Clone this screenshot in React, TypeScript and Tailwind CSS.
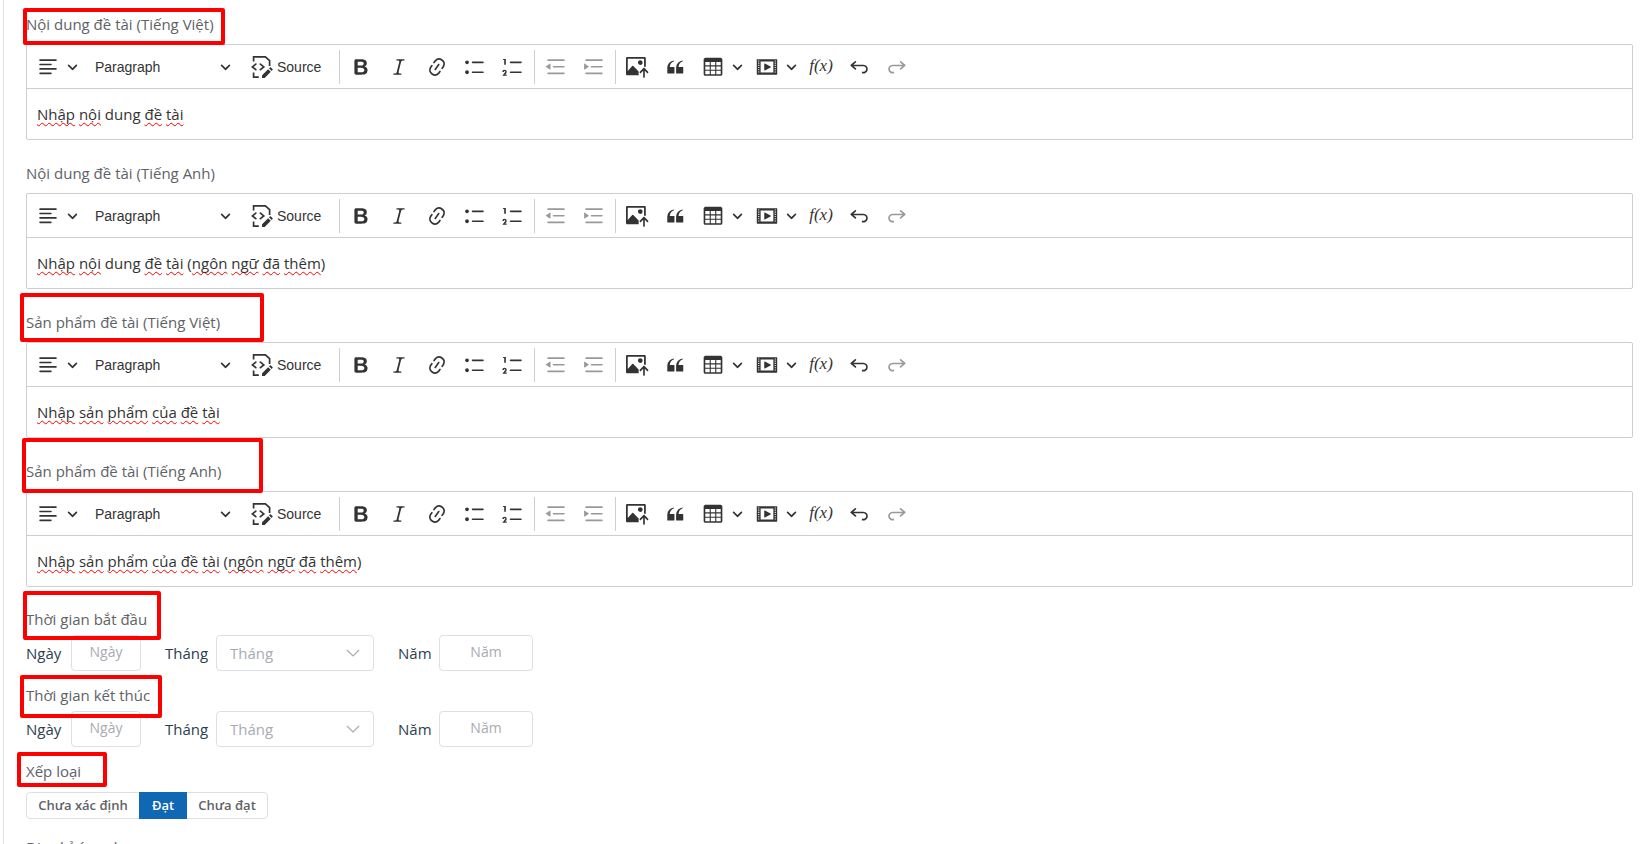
import React from "react";

const sans = "font-['Open_Sans','Noto_Sans',sans-serif]";

const ICONS = {
  align:
    "M2 3.75c0 .414.336.75.75.75h14.5a.75.75 0 1 0 0-1.5H2.75a.75.75 0 0 0-.75.75zm0 8c0 .414.336.75.75.75h14.5a.75.75 0 1 0 0-1.5H2.75a.75.75 0 0 0-.75.75zm0 4c0 .414.336.75.75.75h9.929a.75.75 0 1 0 0-1.5H2.75a.75.75 0 0 0-.75.75zm0-8c0 .414.336.75.75.75h9.929a.75.75 0 1 0 0-1.5H2.75a.75.75 0 0 0-.75.75z",
  bold:
    "M10.187 17H5.773c-.637 0-1.092-.138-1.364-.415-.273-.277-.409-.718-.409-1.323V4.738c0-.617.14-1.062.419-1.332.279-.27.73-.406 1.354-.406h4.68c.69 0 1.288.041 1.793.124.506.083.96.242 1.36.478.341.197.644.447.906.75a3.262 3.262 0 0 1 .808 2.162c0 1.401-.722 2.426-2.167 3.075C15.05 10.175 16 11.315 16 13.01a3.756 3.756 0 0 1-2.296 3.504 6.1 6.1 0 0 1-1.517.377c-.571.073-1.238.11-2 .11zm-.217-6.217H7v4.087h3.069c1.977 0 2.965-.69 2.965-2.072 0-.707-.256-1.22-.768-1.537-.512-.319-1.277-.478-2.296-.478zM7 5.13v3.619h2.606c.729 0 1.292-.067 1.69-.2a1.6 1.6 0 0 0 .91-.765c.165-.267.247-.566.247-.897 0-.707-.26-1.176-.778-1.409-.519-.232-1.31-.348-2.375-.348H7z",
  italic:
    "m9.586 14.633.021.004c-.036.335.095.655.393.962.082.083.173.15.274.201h1.474a.6.6 0 1 1 0 1.2H5.304a.6.6 0 0 1 0-1.2h1.15c.474-.07.809-.182 1.005-.334.157-.122.291-.32.404-.597l2.416-9.55a1.053 1.053 0 0 0-.281-.823 1.12 1.12 0 0 0-.442-.296H8.15a.6.6 0 0 1 0-1.2h6.443a.6.6 0 1 1 0 1.2h-1.195c-.376.056-.65.155-.823.296-.215.175-.423.439-.623.79l-2.366 9.347z",
  link:
    "m11.077 15 .991-1.416a.75.75 0 1 1 1.229.86l-1.148 1.64a.748.748 0 0 1-.217.206 5.251 5.251 0 0 1-8.503-5.955.741.741 0 0 1 .12-.274l1.147-1.639a.75.75 0 1 1 1.228.86L4.933 10.7l.006.003a3.75 3.75 0 0 0 6.132 4.294l.006.004zm5.494-5.335a.748.748 0 0 1-.12.274l-1.147 1.639a.75.75 0 1 1-1.228-.86l.86-1.23a3.75 3.75 0 0 0-6.144-4.301l-.86 1.229a.75.75 0 0 1-1.229-.86l1.148-1.64a.748.748 0 0 1 .217-.206 5.251 5.251 0 0 1 8.503 5.955zm-4.563-2.532a.75.75 0 0 1 .184 1.045l-3.155 4.505a.75.75 0 1 1-1.229-.86l3.155-4.506a.75.75 0 0 1 1.045-.184z",
  bullets:
    "M7 5.75c0 .414.336.75.75.75h9.5a.75.75 0 1 0 0-1.5h-9.5a.75.75 0 0 0-.75.75zm-6 0C1 4.784 1.777 4 2.75 4c.966 0 1.75.777 1.75 1.75 0 .966-.777 1.75-1.75 1.75C1.784 7.5 1 6.723 1 5.75zm6 9c0 .414.336.75.75.75h9.5a.75.75 0 1 0 0-1.5h-9.5a.75.75 0 0 0-.75.75zm-6 0c0-.966.777-1.75 1.75-1.75.966 0 1.75.777 1.75 1.75 0 .966-.777 1.75-1.75 1.75-.966 0-1.75-.777-1.75-1.75z",
  numbers:
    "M7 5.75c0 .414.336.75.75.75h9.5a.75.75 0 1 0 0-1.5h-9.5a.75.75 0 0 0-.75.75zM3.5 3v5H2V3.7H1v-1h2.5V3zM.343 17.857l2.59-3.257H2.92a.6.6 0 1 0-1.04 0H.302a2 2 0 1 1 3.995 0h-.001c-.048.405-.16.734-.333.988-.175.254-.59.692-1.244 1.312H4.3v1h-4l.043-.043zM7 14.75a.75.75 0 0 1 .75-.75h9.5a.75.75 0 1 1 0 1.5h-9.5a.75.75 0 0 1-.75-.75z",
  outdent:
    "M2 3.75c0 .414.336.75.75.75h14.5a.75.75 0 1 0 0-1.5H2.75a.75.75 0 0 0-.75.75zm5 6c0 .414.336.75.75.75h9.5a.75.75 0 1 0 0-1.5h-9.5a.75.75 0 0 0-.75.75zM2.75 16.5h14.5a.75.75 0 1 0 0-1.5H2.75a.75.75 0 1 0 0 1.5zM4.368 6.95.98 9.358a.4.4 0 0 0 .013.661l3.39 2.207A.4.4 0 0 0 5 11.892V7.275a.4.4 0 0 0-.632-.326z",
  indent:
    "M2 3.75c0 .414.336.75.75.75h14.5a.75.75 0 1 0 0-1.5H2.75a.75.75 0 0 0-.75.75zm5 6c0 .414.336.75.75.75h9.5a.75.75 0 1 0 0-1.5h-9.5a.75.75 0 0 0-.75.75zM2.75 16.5h14.5a.75.75 0 1 0 0-1.5H2.75a.75.75 0 1 0 0 1.5zM1.632 6.95 5.02 9.358a.4.4 0 0 1-.013.661l-3.39 2.207A.4.4 0 0 1 1 11.892V7.275a.4.4 0 0 1 .632-.326z",
  image:
    "M1.201 1c-.662 0-1.2.47-1.2 1.1v14.248c0 .64.533 1.152 1.185 1.152H11.5v-3.4L6.617 9.15a.694.694 0 0 0-.957-.033L1.602 13.55V2.553l14.798.003V9.7H18V2.1c0-.63-.547-1.1-1.2-1.1H1.202Zm11.723 2.805a2.094 2.094 0 0 0-1.621.832 2.127 2.127 0 0 0 1.136 3.357 2.13 2.13 0 0 0 2.611-1.506 2.133 2.133 0 0 0-.76-2.244 2.13 2.13 0 0 0-1.366-.44ZM15.6 19.2a.75.75 0 0 0 1.5 0v-5.9l2 2.1a.75.75 0 0 0 1.1-1l-3.3-3.6a.75.75 0 0 0-1.1 0l-3.3 3.6a.75.75 0 0 0 1.1 1l2-2.1z",
  quote:
    "M3 10.423a6.5 6.5 0 0 1 6.056-6.408l.038.67C6.448 5.423 5.354 7.663 5.22 10H9c.552 0 .5.432.5.986v4.511c0 .554-.448.503-1 .503h-5c-.552 0-.5-.449-.5-1.003v-4.574zm8 0a6.5 6.5 0 0 1 6.056-6.408l.038.67c-2.646.739-3.74 2.979-3.873 5.315H17c.552 0 .5.432.5.986v4.511c0 .554-.448.503-1 .503h-5c-.552 0-.5-.449-.5-1.003v-4.574z",
  table:
    "M3 5.5v3h4v-3H3Zm0 4v3h4v-3H3Zm0 4v3h4v-3H3Zm5 3h4v-3H8v3Zm5 0h4v-3h-4v3Zm4-4v-3h-4v3h4Zm0-4v-3h-4v3h4Zm1.5 8A1.5 1.5 0 0 1 17 18H3a1.5 1.5 0 0 1-1.5-1.5V3c.222-.863 1.068-1.5 2-1.5h13c.932 0 1.778.637 2 1.5v13.5Zm-6.5-4v-3H8v3h4Zm0-4v-3H8v3h4Z",
  media:
    "M18.68 3.03c.6 0 .59-.03.59.55v12.84c0 .59.01.56-.59.56H1.29c-.6 0-.59.03-.59-.56V3.58c0-.58-.01-.55.6-.55h17.38ZM15.77 15V5H4.2v10h11.57ZM2 4v1h1V4H2Zm0 2v1h1V6H2Zm0 2v1h1V8H2Zm0 2v1h1v-1H2Zm0 2v1h1v-1H2Zm0 2v1h1v-1H2ZM17 4v1h1V4h-1Zm0 2v1h1V6h-1Zm0 2v1h1V8h-1Zm0 2v1h1v-1h-1Zm0 2v1h1v-1h-1Zm0 2v1h1v-1h-1ZM7.5 7.177a.4.4 0 0 1 .593-.351l5.133 2.824a.4.4 0 0 1 0 .7l-5.133 2.824a.4.4 0 0 1-.593-.35V7.176v.001Z",
  undo:
    "m5.042 9.367 2.189 1.837a.75.75 0 0 1-.965 1.149l-3.788-3.18a.747.747 0 0 1-.21-.284.75.75 0 0 1 .17-.945L6.23 4.762a.75.75 0 1 1 .964 1.15L4.863 7.866h8.917A.75.75 0 0 1 14 7.9a4 4 0 1 1-1.477 7.718l.344-1.489a2.5 2.5 0 1 0 1.094-4.73l.008-.032H5.042z",
  redo:
    "m14.958 9.367-2.189 1.837a.75.75 0 0 0 .965 1.149l3.788-3.18a.747.747 0 0 0 .21-.284.75.75 0 0 0-.17-.945L13.77 4.762a.75.75 0 1 0-.964 1.15l2.331 1.955H6.22A.75.75 0 0 0 6 7.9a4 4 0 1 0 1.477 7.718l-.344-1.489A2.5 2.5 0 1 1 6.039 9.4l-.008-.032h8.927z",
};

type IconName = keyof typeof ICONS;

function Icon({ name }: { name: IconName }) {
  return (
    <svg viewBox="0 0 20 20" className="size-[22px] shrink-0 overflow-visible" fill="currentColor" fillRule="evenodd" aria-hidden="true">
      <path d={ICONS[name]} />
    </svg>
  );
}

function SourceIcon() {
  return (
    <svg viewBox="0 0 22 22" className="size-[22px] shrink-0 overflow-visible" fill="none" stroke="currentColor" strokeWidth="1.7" aria-hidden="true">
      <path d="M2.6 5.4V.9h11.8l4.2 3.8v5.2M2.6 16.4v4.7h5.2" />
      <path d="M4.8 8.1 1.4 10.9l3.4 2.8M9.4 8.1l3.4 2.8-3.4 2.8" strokeLinecap="round" />
      <path d="m11 22 .1-2.8 6-6 2.7 2.6-6.1 6.2zM18 12.3l.9-.9c.3-.3.7-.3 1 0l1.6 1.6c.3.3.3.7 0 1l-.9.9z" fill="currentColor" stroke="none" />
    </svg>
  );
}

function Caret() {
  return (
    <svg viewBox="0 0 10 10" className="size-[11px] shrink-0" fill="currentColor" aria-hidden="true">
      <path d="M.941 4.523a.75.75 0 1 1 1.06-1.06l3.006 3.005 3.005-3.005a.75.75 0 1 1 1.06 1.06l-3.549 3.55a.75.75 0 0 1-1.168-.136L.941 4.523z" />
    </svg>
  );
}

function Tool({ name, label, disabled }: { name: IconName; label: string; disabled?: boolean }) {
  return (
    <button type="button" aria-label={label} disabled={disabled} className="flex h-9 w-[38px] items-center justify-center disabled:text-[#999]">
      <Icon name={name} />
    </button>
  );
}

function SplitTool({ name, label }: { name: IconName; label: string }) {
  return (
    <button type="button" aria-label={label} className="flex h-9 w-[54px] items-center gap-2 pl-2">
      <Icon name={name} />
      <Caret />
    </button>
  );
}

function Separator() {
  return <span className="mx-[2px] h-[34px] w-px bg-[#ccced1]" />;
}

function Toolbar() {
  return (
    <div role="toolbar" className="flex h-11 items-center border-b border-[#ccced1] pl-[2px] font-['Liberation_Sans',Arial,sans-serif] text-sm text-[#333]">
      <SplitTool name="align" label="Text alignment" />
      <button type="button" className="ml-3 flex h-9 w-[136px] items-center justify-between">
        Paragraph
        <Caret />
      </button>
      <button type="button" className="ml-5 flex h-9 w-[86px] items-center gap-1">
        <SourceIcon />
        Source
      </button>
      <Separator />
      <Tool name="bold" label="Bold" />
      <Tool name="italic" label="Italic" />
      <Tool name="link" label="Link" />
      <Tool name="bullets" label="Bulleted List" />
      <Tool name="numbers" label="Numbered List" />
      <Separator />
      <Tool name="outdent" label="Decrease indent" disabled />
      <Tool name="indent" label="Increase indent" disabled />
      <Separator />
      <Tool name="image" label="Insert image" />
      <Tool name="quote" label="Block quote" />
      <SplitTool name="table" label="Insert table" />
      <SplitTool name="media" label="Insert media" />
      <button type="button" aria-label="Math" className="flex h-9 w-[38px] items-center justify-center font-['Liberation_Serif',serif] text-[17px] italic">
        f(x)
      </button>
      <Tool name="undo" label="Undo" />
      <Tool name="redo" label="Redo" disabled />
    </div>
  );
}

/** Words wrapped in underscores get the spelling mark. */
function Marked({ text }: { text: string }) {
  return (
    <>
      {text.split("_").map((part, i) =>
        i % 2 ? (
          <span key={i} className="underline decoration-[#f00] decoration-wavy decoration-1 underline-offset-2 [text-decoration-skip-ink:none]">
            {part}
          </span>
        ) : (
          part
        ),
      )}
    </>
  );
}

function Highlight({ className }: { className: string }) {
  return <span aria-hidden="true" className={"pointer-events-none absolute z-10 rounded-xs border-4 border-[#f00] " + className} />;
}

function Editor({ id, label, text, highlight }: { id: string; label: string; text: string; highlight?: string }) {
  return (
    <section>
      <div className="relative flex h-[53px] items-center pt-3">
        <span id={id} className="text-[15px] leading-6 text-[#606266]">{label}</span>
        {highlight && <Highlight className={highlight} />}
      </div>
      <div className="rounded-xs border border-[#ccced1]">
        <Toolbar />
        <div role="textbox" aria-labelledby={id} contentEditable suppressContentEditableWarning spellCheck={false} className="h-[50px] px-[10px] py-[13px] text-[15px] leading-6 text-[#333] outline-none">
          <Marked text={text} />
        </div>
      </div>
    </section>
  );
}

function DateRow({ id, label, highlight }: { id: string; label: string; highlight: string }) {
  const box = "h-9 rounded border border-[#dcdfe6] bg-white placeholder:text-[#a8abb2]";
  return (
    <fieldset>
      <legend className="relative h-10 pt-3 text-[15px] leading-6 text-[#606266]">
        {label}
        <Highlight className={highlight} />
      </legend>
      <div className="flex items-center text-[15px] text-[#2c3e50]">
        <label htmlFor={id + "-d"} className="w-[45px]">Ngày</label>
        <input id={id + "-d"} placeholder="Ngày" className={box + " w-[70px] pb-1 text-center text-sm"} />
        <label htmlFor={id + "-m"} className="ml-6 w-[51px]">Tháng</label>
        <div className="relative">
          <select id={id + "-m"} className={box + " w-[158px] appearance-none pl-[13px] text-[#a8abb2]"}>
            <option>Tháng</option>
          </select>
          <svg viewBox="0 0 14 8" className="pointer-events-none absolute top-[14px] right-[14px] h-2 w-[14px]" fill="none" stroke="#a8abb2" strokeWidth="1.2" aria-hidden="true">
            <path d="m1 1 6 6 6-6" />
          </svg>
        </div>
        <label htmlFor={id + "-y"} className="ml-6 w-[41px]">Năm</label>
        <input id={id + "-y"} placeholder="Năm" className={box + " w-[94px] pb-1 text-center text-sm"} />
      </div>
    </fieldset>
  );
}

export default function App() {
  return (
    <main className={"h-screen overflow-hidden bg-white pl-[3px] " + sans}>
      <div className="min-h-full border-l border-[#e4e4e7] pr-[17px] pl-[22px]">
        <div className="-mt-[9px]">
          <Editor id="content-vi" label="Nội dung đề tài (Tiếng Việt)" text="_Nhập_ _nội_ dung _đề_ _tài_" highlight="top-[17px] -left-[3px] h-[37px] w-[202px]" />
          <Editor id="content-en" label="Nội dung đề tài (Tiếng Anh)" text="_Nhập_ _nội_ dung _đề_ _tài_ (_ngôn_ _ngữ_ _đã_ _thêm_)" />
          <Editor id="product-vi" label="Sản phẩm đề tài (Tiếng Việt)" text="_Nhập_ _sản_ _phẩm_ _của_ _đề_ _tài_" highlight="top-[4px] -left-[6px] h-[49px] w-[244px]" />
          <Editor id="product-en" label="Sản phẩm đề tài (Tiếng Anh)" text="_Nhập_ _sản_ _phẩm_ _của_ _đề_ _tài_ (_ngôn_ _ngữ_ _đã_ _thêm_)" highlight="top-0 -left-[4px] h-[55px] w-[241px]" />
        </div>
        <div className="pt-2">
          <DateRow id="start" label="Thời gian bắt đầu" highlight="-top-[4px] -left-[3px] h-[49px] w-[138px]" />
          <DateRow id="end" label="Thời gian kết thúc" highlight="top-[4px] -left-[6px] h-[43px] w-[142px]" />
        </div>
        <fieldset>
          <legend className="relative h-[45px] pt-3 text-[15px] leading-6 text-[#606266]">
            Xếp loại
            <Highlight className="top-[5px] -left-[9px] h-[35px] w-[90px]" />
          </legend>
          <div className="flex h-[27px] w-fit rounded border border-[#dcdfe6] text-[13px] font-semibold text-[#606266]">
            <button type="button" className="w-[112px]">Chưa xác định</button>
            <button type="button" aria-pressed="true" className="-my-px w-12 bg-[#1067b3] text-white">Đạt</button>
            <button type="button" className="w-20">Chưa đạt</button>
          </div>
        </fieldset>
        <div className="pt-4 text-[15px] leading-6 text-[#606266]">Địa chỉ ứng dụng</div>
      </div>
    </main>
  );
}
